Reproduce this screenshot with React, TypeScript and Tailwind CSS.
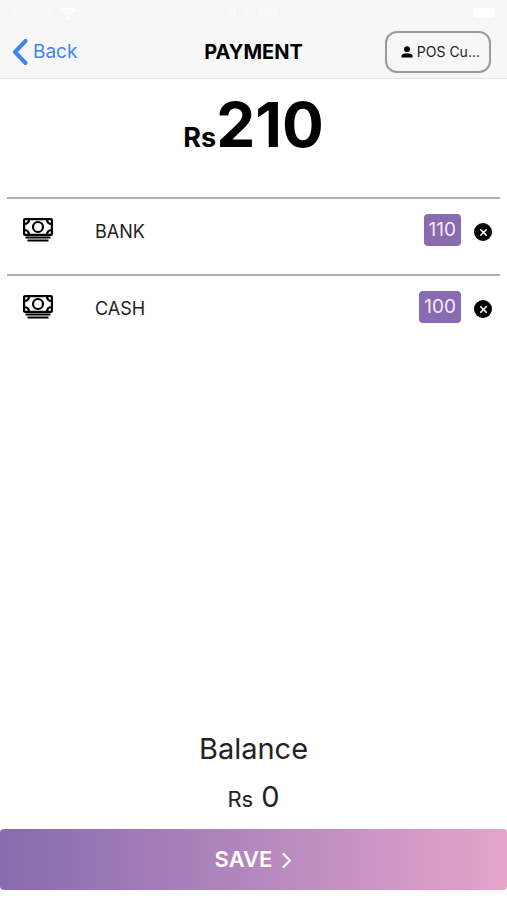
import { useState } from 'react';
import { X } from 'lucide-react';

interface Payment {
  id: number;
  method: string;
  amount: number;
}

const initialPayments: Payment[] = [
  { id: 1, method: 'BANK', amount: 110 },
  { id: 2, method: 'CASH', amount: 100 },
];

const total = 210;

function CashIcon() {
  return (
    <svg width="30" height="24" viewBox="0 0 30 24" fill="none" stroke="#000" aria-hidden="true">
      <rect x="1.1" y="1.1" width="27.8" height="15.8" rx="1" strokeWidth="2.2" />
      <circle cx="15" cy="9" r="5" strokeWidth="2.2" />
      <path d="M1 6C4 6 6 4 6 1M29 6C26 6 24 4 24 1M1 12C4 12 6 14 6 17M29 12C26 12 24 14 24 17" strokeWidth="2.2" />
      <path d="M2.500 19.500H27.500" strokeWidth="2" />
      <path d="M4.500 22.500H25.500" strokeWidth="2" />
    </svg>
  );
}

function StatusBar() {
  return (
    <div className="grid h-[26px] grid-cols-3 items-center px-3 text-xs text-white/60">
      <div className="flex items-center gap-2">
        <span>Carrier</span>
        <svg width="17" height="13" viewBox="0 0 17 13" fill="none" stroke="#fff" strokeWidth="2" aria-hidden="true">
          <path d="M1 4.500C5 0.500 12 0.500 16 4.500M4 7.500C6.500 5 10.500 5 13 7.500M7 10.500L8.500 12L10 10.500" />
        </svg>
      </div>
      <span className="text-center font-medium">4:33 PM</span>
      <span className="h-[10px] w-[22px] justify-self-end rounded-xs bg-white" />
    </div>
  );
}

export default function App() {
  const [payments, setPayments] = useState(initialPayments);
  const paid = payments.reduce((sum, p) => sum + p.amount, 0);

  const removePayment = (id: number) => setPayments(payments.filter((p) => p.id !== id));

  return (
    <div className="flex min-h-screen flex-col bg-white pb-[10px] font-['Inter',sans-serif] text-black">
      <header className="border-b border-[#e2e2e2] bg-[#f7f7f7]">
        <StatusBar />
        <div className="grid h-[52px] grid-cols-[1fr_auto_1fr] items-center px-3">
          <button type="button" className="flex items-center gap-[5px] justify-self-start text-[19px] text-[#3f83f4]">
            <svg width="16" height="26" viewBox="0 0 16 26" fill="none" stroke="currentColor" strokeWidth="4" aria-hidden="true">
              <path d="M13.500 2L3 13L13.500 24" strokeLinecap="round" strokeLinejoin="round" />
            </svg>
            Back
          </button>
          <h1 className="text-xl font-bold">PAYMENT</h1>
          <button
            type="button"
            className="mr-1 flex h-[42px] items-center gap-1 justify-self-end rounded-xl border-2 border-[#9a9a9a] px-[9px] pl-[14px] text-sm text-[#222]"
          >
            <svg width="12" height="12" viewBox="0 0 12 12" fill="#000" aria-hidden="true">
              <circle cx="6" cy="3.200" r="2.900" />
              <path d="M0.500 11.500V9.800C0.500 8 3 7.200 6 7.200S11.500 8 11.500 9.800V11.500Z" />
            </svg>
            POS Cu...
          </button>
        </div>
      </header>

      <main className="flex grow flex-col">
        <p className="flex h-[118px] items-baseline justify-center pt-4 font-bold">
          <span className="text-[27px]">Rs</span>
          <span className="text-[62px] leading-[60px]">{total}</span>
        </p>

        <ul className="px-[7px]">
          {payments.map((payment) => (
            <li key={payment.id} className="flex h-[77px] items-start border-t-2 border-[#b0b0b0] pl-4 pr-2">
              <div className="flex h-[62px] grow items-center">
                <span className="w-[72px]">
                  <CashIcon />
                </span>
                <span className="grow pt-1 text-lg text-[#222]">{payment.method}</span>
                <span className="flex h-8 items-center rounded-sm bg-[#886bb0] px-[5px] text-[19px] text-[#f6eafa]">
                  {payment.amount}
                </span>
                <button
                  type="button"
                  aria-label={`Remove ${payment.method}`}
                  onClick={() => removePayment(payment.id)}
                  className="ml-[13px] mt-1 flex size-[18px] items-center justify-center rounded-full bg-black text-white"
                >
                  <X size={11} strokeWidth={3.5} />
                </button>
              </div>
            </li>
          ))}
        </ul>

        <section className="mt-auto pb-1.5 text-center text-[#222]">
          <h2 className="text-[29px] leading-[48px]">Balance</h2>
          <p className="text-[29px] leading-[48px]">
            <span className="text-[22px]">Rs</span> {total - paid}
          </p>
        </section>
      </main>

      <button
        type="button"
        className="flex h-[61px] w-full items-center justify-center gap-2.5 rounded-sm bg-linear-to-r from-[#866bae] to-[#e5a4cb] text-[22px] font-semibold text-white"
      >
        SAVE
        <svg width="10" height="16" viewBox="0 0 10 16" fill="none" stroke="currentColor" strokeWidth="2.200" aria-hidden="true">
          <path d="M1.500 2L8 8.500L1.500 15" strokeLinecap="round" strokeLinejoin="round" />
        </svg>
      </button>
    </div>
  );
}
